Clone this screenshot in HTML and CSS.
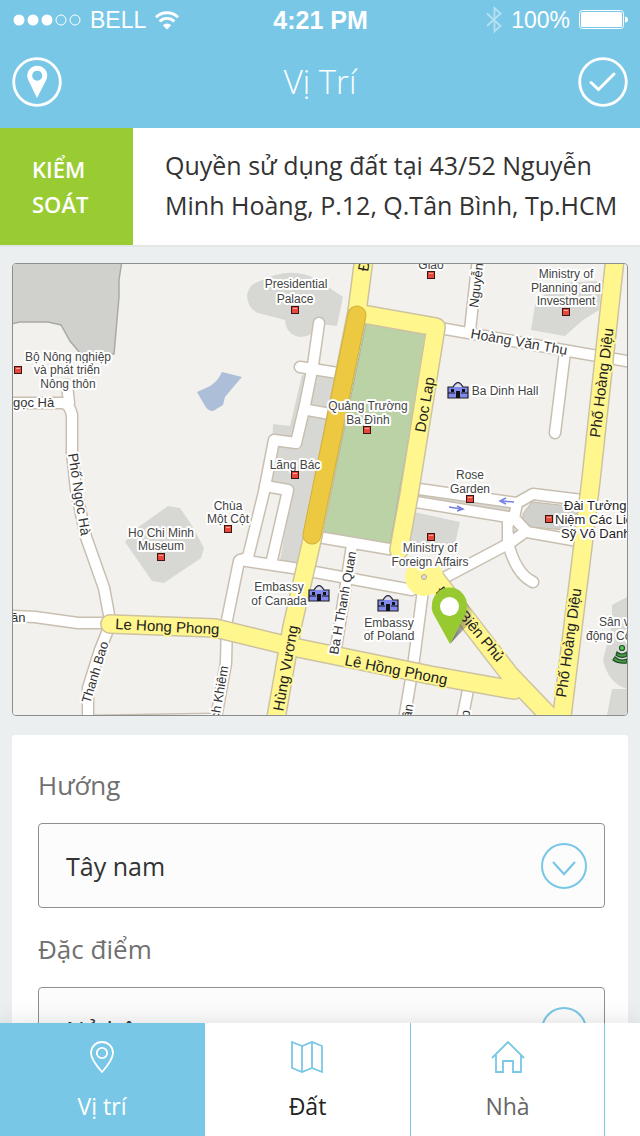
FILE: index.html
```html
<!DOCTYPE html>
<html lang="vi">
<head>
<meta charset="utf-8">
<meta name="viewport" content="width=device-width, initial-scale=1">
<title>Vị Trí</title>
<link rel="stylesheet" href="styles.css">
</head>
<body>
<header class="top">
  <div class="status">
    <div class="status-left">
      <svg width="68" height="12" viewBox="0 0 68 12" aria-hidden="true">
        <g fill="#fff"><circle cx="6" cy="6" r="5.5"/><circle cx="20" cy="6" r="5.5"/><circle cx="34" cy="6" r="5.5"/></g>
        <g fill="none" stroke="#fff"><circle cx="48" cy="6" r="5"/><circle cx="62" cy="6" r="5"/></g>
      </svg>
      <span>BELL</span>
      <svg width="24" height="19" viewBox="0 0 24 19" aria-hidden="true">
        <g fill="none" stroke="#fff" stroke-width="2.8"><path d="M1 6.3a15.6 15.6 0 0 1 22 0"/><path d="M4.6 10.4a10.5 10.5 0 0 1 14.8 0"/></g>
        <path d="M12 18.5L7.8 14.2a6 6 0 0 1 8.400 0z" fill="#fff"/>
      </svg>
    </div>
    <span class="clock">4:21 PM</span>
    <div class="status-right">
      <svg width="16" height="28" viewBox="0 0 16 28" aria-hidden="true"><path d="M1 7.500L14.500 20L8.500 25.500V2L14.500 7.500L1 20" fill="none" stroke="#fff" stroke-opacity=".45" stroke-width="1.800"/></svg>
      <span>100%</span>
      <svg width="49" height="20" viewBox="0 0 49 20" aria-hidden="true"><rect x=".5" y=".5" width="44" height="18" rx="3" fill="none" stroke="#fff"/><rect x="2" y="2" width="41" height="15" rx="1.500" fill="#fff"/><path d="M46 6.500q3 .5 3 3t-3 3z" fill="#fff"/></svg>
    </div>
  </div>
  <div class="nav">
    <button class="round" type="button" aria-label="Định vị">
      <svg width="50" height="50" viewBox="0 0 50 50"><circle cx="25" cy="25" r="23.300" fill="none" stroke="#fff" stroke-width="2.800"/><path fill="#fff" fill-rule="evenodd" d="M25 41L16.500 23.500a10 10 0 1 1 17.500 0zM25.200 13.700a5 5 0 1 0 .01 0z"/></svg>
    </button>
    <h1 class="title">Vị Trí</h1>
    <button class="round" type="button" aria-label="Xong">
      <svg width="50" height="50" viewBox="0 0 50 50"><circle cx="25" cy="25" r="23.300" fill="none" stroke="#fff" stroke-width="2.800"/><path d="M13 25.500L20.500 32.500L36 17" fill="none" stroke="#fff" stroke-width="3" stroke-linecap="round"/></svg>
    </button>
  </div>
</header>

<section class="banner">
  <strong class="badge">KIỂM SOÁT</strong>
  <p class="address">Quyền sử dụng đất tại 43/52 Nguyễn Minh Hoàng, P.12, Q.Tân Bình, Tp.HCM</p>
</section>

<main class="content">
  <div class="map">
    <svg viewBox="13 264 614 451" role="img" aria-label="Bản đồ">
      <defs>
        <g id="minor">
          <path class="w11" d="M13 403H62Q69 403 72 415L72 452L76 490L86 537L104 588L110 620M67 385L69 403"/>
          <path class="w11" d="M13 616L35 617L78 623H112M110 625L100 650L88 688V718"/>
          <path class="w11" d="M95 721L150 720L218 719"/>
          <path class="w11" d="M319 323L313 365L305 405L296 443L274 440L264 492L248 557L239 561L227 620L226 663L216 718"/>
          <path class="w11" d="M300 367L338 373M308 410L330 414M265 486L288 490L272 560"/>
          <path class="w11" d="M240 560L293 568L412 590M318 537L395 550"/>
          <path class="w11" d="M352 545L335 655"/>
          <path class="w11" d="M423 590L413 667L404 720M468 690L462 720"/>
          <path class="w11" d="M412 488L517 503L533 494L582 500M410 501L514 518L527 532L578 541"/>
          <path class="w11" d="M517 503L514 518M508 522V543Q516 574 533 582M440 580L510 543L525 532"/>
          <path class="w11" d="M440 328L563 350L632 362M478 258L470 330M565 352L555 433"/>
        </g>
        <g id="major">
          <path class="w17" d="M110 624L215 628L293 647L430 675L514 690"/>
          <path class="w17" d="M364 258L357 312L312 540L292 627L275 724"/>
          <path class="w17" d="M357 313L436 327L409 495L399 550"/>
          <path class="w17" d="M435 578L510 675L557 724"/>
          <path class="w17" d="M615 258L591 480L561 724"/>
        </g>
        <g id="hall">
          <path d="M-10 8V-3H-5Q0 -12 5 -3H10V8z" fill="#8289ee" stroke="#222" stroke-width="1.200"/>
          <path d="M-4 -3Q0 -10 4 -3z" fill="#ddd"/><path d="M-7 -1h3v3h-3zM4 -1h3v3h-3zM-2 1h4v7h-4z" fill="#111"/><path d="M-10 3H-3M3 3H10" stroke="#111"/>
        </g>
        <g id="poi"><rect x="-3.500" y="-3.500" width="7" height="7" fill="#e8483c" stroke="#3b1512"/><path d="M-2 -1.500H2" stroke="#f8a79c"/></g>
        <linearGradient id="shade" x1="0" x2="1"><stop offset="0" stop-color="#333" stop-opacity=".75"/><stop offset="1" stop-color="#333" stop-opacity=".08"/></linearGradient>
      </defs>
      <rect x="13" y="264" width="614" height="451" fill="#f2f1ed"/>
      <path d="M10 324L20 322H48L61 325L70 341L80 353L114 354L119 297V280L122 260H10z" fill="#d0d1cc" stroke="#a9aaa8" stroke-width="1.500"/>
      <path d="M197 392L208 387Q217 383 222 372L242 377L235 385L225 397L223 405L213 411Q208 411 205 406z" fill="#adbfd8"/>
      <g fill="#d7d8d4">
        <path d="M247 295Q249 284 260 281Q292 265 318 280L343 297L337 326L319 324Q314 337 299 337Q286 334 285 320L258 313Q247 308 247 295z"/>
        <path d="M302 375L337 372L299 563L280 560L292 494L270 487L273 424L290 426z"/>
        <path d="M168 506L180 508L191 524L204 548L201 558L164 583L152 581L125 542L137 528z"/>
        <path d="M535 305L555 283L602 281L599 310L583 320L565 336L531 330z"/>
        <path d="M414 512L460 522L454 548H410z"/>
        <path d="M627 597L612 605V625L603 660Q608 683 627 689zM612 689H627V715H607z"/>
        <path d="M412 493L518 509V515L412 500z"/>
      </g>
      <path d="M366 323L427 334L390 545L323 532z" fill="#bbd2a7" stroke="#a6b397"/>
      <use href="#minor" class="edge minor-edge"/>
      <use href="#minor" class="surface minor-surface"/>
      <path d="M523 514L532 502L578 507V531L531 527L523 519z" fill="#d0d1cd" stroke="#c5baa9"/>
      <path d="M513 526L518 530L513 533z" fill="#d7d8d4" stroke="#c5baa9"/>
      <use href="#major" class="edge major-edge"/>
      <use href="#major" class="surface major-surface"/>
      <circle cx="424" cy="577" r="19" fill="#fff68d"/><circle cx="424" cy="577" r="2.500" fill="#ddd" stroke="#b8aa78"/>
      <path d="M357 315L312 535" stroke="#d2b23c" stroke-width="19" stroke-linecap="round"/>
      <path d="M357 315L312 535" stroke="#edc841" stroke-width="17" stroke-linecap="round"/>
      <path d="M514 502L502 501M506 498L500 501L506 504M449 507L461 509M457 506L463 509L457 511" fill="none" stroke="#777fe2" stroke-width="1.500"/>

      <g class="place">
        <text x="296" y="288">Presidential</text><text x="295" y="303">Palace</text>
        <text x="431" y="269">Giao</text>
        <text x="566" y="278">Ministry of</text><text x="566" y="292">Planning and</text><text x="566" y="305">Investment</text>
        <text x="505" y="395">Ba Dinh Hall</text>
        <text x="368" y="410">Quảng Trường</text><text x="368" y="424">Ba Đình</text>
        <text x="295" y="469">Lăng Bác</text>
        <text x="470" y="479">Rose</text><text x="470" y="493">Garden</text>
        <text x="68" y="361">Bộ Nông nghiệp</text><text x="67" y="374">và phát triển</text><text x="68" y="388">Nông thôn</text>
        <text x="228" y="510">Chùa</text><text x="228" y="523">Một Cột</text>
        <text x="161" y="537">Ho Chi Minh</text><text x="161" y="550">Museum</text>
        <text x="279" y="591">Embassy</text><text x="279" y="605">of Canada</text>
        <text x="389" y="627">Embassy</text><text x="389" y="640">of Poland</text>
        <text x="430" y="552">Ministry of</text><text x="430" y="566">Foreign Affairs</text>
      </g>
      <g class="place from-left">
        <text x="599" y="626">Sân vận</text><text x="586" y="640">động Cột</text>
      </g>
      <g class="place from-left dark">
        <text x="564" y="510">Đài Tưởng</text><text x="555" y="524">Niệm Các Liệt</text><text x="561" y="538">Sỹ Vô Danh</text>
      </g>
      <g class="street">
        <text x="13" y="407">gọc Hà</text><text x="11" y="622">ăn</text>
        <text transform="translate(478 308) rotate(-83)">Nguyễn</text>
        <text class="wide" transform="translate(470 338) rotate(10)">Hoàng Văn Thụ</text>
        <text class="wide" transform="translate(68 454) rotate(81)">Phố Ngọc Hà</text>
        <text transform="translate(338 655) rotate(-80)">Ba H Thanh Quan</text>
        <text transform="translate(219 720) rotate(-80)">ch Khiêm</text>
        <text transform="translate(90 704) rotate(-73)">Thanh Bao</text>
        <text transform="translate(411 719) rotate(-80)">ần</text>
        <text transform="translate(469 718) rotate(-80)">p</text>
      </g>
      <g class="avenue">
        <text transform="translate(115 629) rotate(3)">Le Hong Phong</text>
        <text transform="translate(344 665) rotate(11)">Lê Hồng Phong</text>
        <text transform="translate(281 724) rotate(-80)">g Hùng Vương</text>
        <text transform="translate(425 433) rotate(-80)">Doc Lap</text>
        <text transform="translate(600 438) rotate(-83)">Phố Hoàng Diệu</text>
        <text transform="translate(566 698) rotate(-82)">Phố Hoàng Diệu</text>
        <text transform="translate(458 616) rotate(50)">Biên Phủ</text>
        <text transform="translate(435 592) rotate(50)">Đ</text>
        <text transform="translate(368 272) rotate(-80)">Đ</text>
      </g>

      <use href="#poi" x="295" y="310"/><use href="#poi" x="431" y="275"/><use href="#poi" x="566" y="312"/>
      <use href="#poi" x="367" y="430"/><use href="#poi" x="295" y="475"/><use href="#poi" x="470" y="499"/>
      <use href="#poi" x="18" y="370"/><use href="#poi" x="228" y="529"/><use href="#poi" x="161" y="557"/>
      <use href="#poi" x="431" y="537"/><use href="#poi" x="549" y="519"/>
      <use href="#hall" x="458" y="390"/><use href="#hall" x="319" y="593"/><use href="#hall" x="388" y="603"/>
      <g stroke="#1d4d22" stroke-width="1.200"><circle cx="622" cy="648" r="2.500" fill="#5c5"/><path d="M617 652Q621 656 627 652V656Q620 659 616 655zM615 657Q620 662 627 659V663Q618 664 613 660z" fill="#4a9a4a"/></g>

      <path d="M450 644L464 616L467 603Q478 618 467 626Q458 635 450 644z" fill="url(#shade)"/>
      <path fill="#97ca30" d="M450 644L434 615Q431 610 432 605A17.500 17.500 0 0 1 467 605Q467 611 465 615z"/>
      <circle cx="449.500" cy="606.500" r="9.500" fill="#fff"/>
    </svg>
  </div>

  <form class="card">
    <label class="label" for="direction">Hướng</label>
    <div class="field">
      <select class="select" id="direction"><option>Tây nam</option><option>Đông bắc</option></select>
      <svg class="chevron" width="46" height="46" viewBox="0 0 46 46" aria-hidden="true"><circle cx="23" cy="23" r="22" fill="none" stroke="#79c7e6" stroke-width="2"/><path d="M12 19L23 31L34 19" fill="none" stroke="#79c7e6" stroke-width="2.200"/></svg>
    </div>
    <label class="label" for="feature">Đặc điểm</label>
    <div class="field">
      <select class="select" id="feature"><option>Nở hậu</option><option>Vuông vức</option></select>
      <svg class="chevron" width="46" height="46" viewBox="0 0 46 46" aria-hidden="true"><circle cx="23" cy="23" r="22" fill="none" stroke="#79c7e6" stroke-width="2"/><path d="M12 19L23 31L34 19" fill="none" stroke="#79c7e6" stroke-width="2.200"/></svg>
    </div>
  </form>
</main>

<nav class="tabs">
  <a class="tab active" href="#vi-tri">
    <svg width="34" height="34" viewBox="0 0 34 34" aria-hidden="true"><g fill="none" stroke="currentColor" stroke-width="1.800"><path d="M17 32Q6 19.500 6 13A11 11 0 0 1 28 13Q28 19.500 17 32z"/><circle cx="17" cy="13" r="5.200"/></g></svg>
    <span>Vị trí</span>
  </a>
  <a class="tab current" href="#dat">
    <svg width="34" height="34" viewBox="0 0 34 34" aria-hidden="true"><path d="M1 2L11 6L21 2L31 6V32L21 28L11 32L1 28zM11 6V32M21 2V28" fill="none" stroke="#79c7e6" stroke-width="1.800"/></svg>
    <span>Đất</span>
  </a>
  <a class="tab" href="#nha">
    <svg width="34" height="34" viewBox="0 0 34 34" aria-hidden="true"><path d="M1 18L17 2L33 18M5 15V32H12V21H22V32H30V15" fill="none" stroke="#79c7e6" stroke-width="1.800"/></svg>
    <span>Nhà</span>
  </a>
</nav>
</body>
</html>
```
FILE: styles.css
```css
* { box-sizing: border-box; }

body {
  margin: 0;
  height: 100vh;
  display: flex;
  flex-direction: column;
  overflow: hidden;
  background: #ebeff0;
  color: #333;
  font-family: "Open Sans", "Noto Sans", sans-serif;
  font-size: 25px;
}

.top { flex: none; height: 128px; background: #79c7e6; color: #fff; }

.status {
  display: grid;
  grid-template-columns: 1fr auto 1fr;
  align-items: center;
  height: 40px;
  padding: 0 12px 0 13px;
  font: 23px/40px "Liberation Sans", Arial, sans-serif;
}
.status-left, .status-right { display: flex; align-items: center; gap: 9px; }
.status-right { justify-content: flex-end; }
.clock { font-size: 25px; font-weight: 700; }

.nav {
  display: flex;
  align-items: center;
  justify-content: space-between;
  height: 84px;
  padding: 0 12px;
}
.round { display: flex; padding: 0; border: 0; background: none; border-radius: 50%; }
.title { margin: 0; font-size: 33px; line-height: 44px; font-weight: 300; }

.banner {
  flex: none;
  display: flex;
  background: #fff;
  border-bottom: 2px solid #e3e5e6;
}
.badge {
  flex: none;
  display: flex;
  align-items: center;
  width: 133px;
  padding: 0 32px;
  background: #9c3;
  color: #fff;
  font-size: 22px;
  line-height: 35px;
  font-weight: 600;
}
.address { margin: 0; padding: 17px 16px 20px 32px; line-height: 40px; }

.content {
  flex: 1;
  min-height: 0;
  overflow: hidden;
  padding: 16px 12px;
}

.map {
  border: 1px solid #8c8e8e;
  border-radius: 4px;
  overflow: hidden;
}
.map svg { display: block; width: 100%; height: auto; }

.edge { --edge: 3px; fill: none; stroke-linejoin: round; stroke-linecap: round; }
.surface { --edge: 0px; fill: none; stroke-linejoin: round; stroke-linecap: round; }
.minor-edge { stroke: #c9bfb0; }
.minor-surface { stroke: #fff; }
.major-edge { stroke: #cdc3a0; }
.major-surface { stroke: #fff68d; }
.w11 { stroke-width: calc(10px + var(--edge)); }
.w17 { stroke-width: calc(17px + var(--edge)); }

.place, .street, .avenue {
  font-family: "Liberation Sans", Arial, sans-serif;
  font-size: 12px;
  fill: #444;
  stroke: #fff;
  stroke-width: 4px;
  stroke-linejoin: round;
  paint-order: stroke;
}
.place { text-anchor: middle; }
.from-left { text-anchor: start; }
.dark { font-size: 13px; fill: #222; }
.street { font-size: 13px; fill: #333; }
.wide { font-size: 14px; }
.avenue { font-size: 15px; fill: #222; stroke: #fff68d; }

.card {
  margin-top: 19px;
  padding: 25px 23px 25px 26px;
  background: #fff;
  border-radius: 3px;
}
.label { display: block; height: 50px; font-size: 26px; line-height: 50px; color: #707070; }
.field { position: relative; margin: 13px 0 16px; }
.select {
  appearance: none;
  display: block;
  width: 100%;
  height: 85px;
  padding: 0 80px 0 27px;
  border: 1px solid #8f8f8f;
  border-radius: 4px;
  background: #fcfcfc;
  color: #333;
  font: inherit;
}
.chevron { position: absolute; right: 18px; top: 20px; pointer-events: none; }

.tabs {
  flex: none;
  position: relative;
  display: grid;
  grid-template-columns: 205fr 206fr 194fr 35fr;
  height: 113px;
  background: #fff;
  box-shadow: 0 0 24px rgba(0, 0, 0, .12);
}
.tab {
  display: flex;
  flex-direction: column;
  align-items: center;
  gap: 14px;
  padding-top: 17px;
  border-right: 1px solid #79c7e6;
  color: #666;
  font-size: 23px;
  line-height: 36px;
  text-decoration: none;
}
.active { background: #79c7e6; color: #fff; }
.current { color: #222; }
```
